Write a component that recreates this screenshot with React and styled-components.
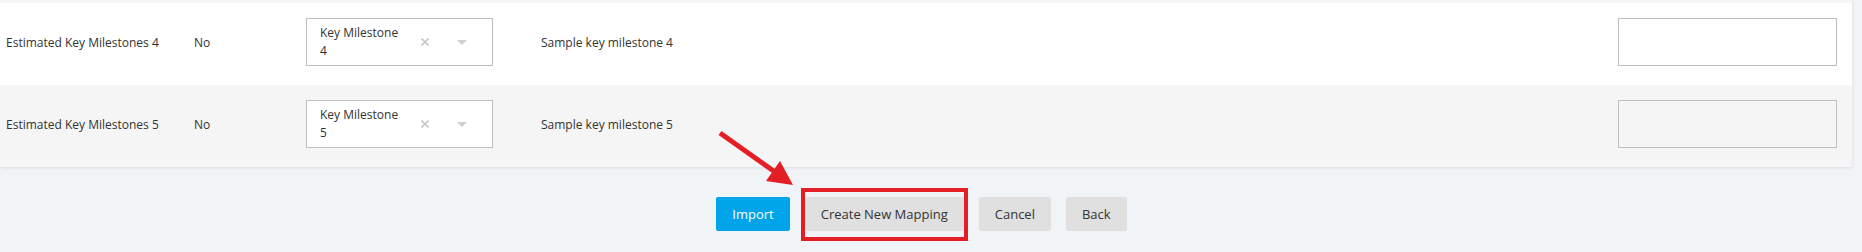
import React from 'react'
import styled, { createGlobalStyle } from 'styled-components'

const rows = [
  { field: 'Estimated Key Milestones 4', required: 'No', value: 'Key Milestone 4', sample: 'Sample key milestone 4' },
  { field: 'Estimated Key Milestones 5', required: 'No', value: 'Key Milestone 5', sample: 'Sample key milestone 5' },
]

export default function App() {
  return (
    <Page>
      <GlobalStyle />
      {/* Tabela de mapeamento */}
      <Panel>
        <RowTail />
        {rows.map((row, i) => (
          <Row key={row.field} striped={i % 2 === 1}>
            <Cell>{row.field}</Cell>
            <Cell>{row.required}</Cell>
            <Cell>
              <Select>
                <SelectValue>{row.value}</SelectValue>
                <ClearIcon viewBox="0 0 8 8">
                  <path d="M0.5 0.5 L7.5 7.5 M7.5 0.5 L0.5 7.5" />
                </ClearIcon>
                <Caret />
              </Select>
            </Cell>
            <Cell>{row.sample}</Cell>
            <TextInput striped={i % 2 === 1} />
          </Row>
        ))}
      </Panel>

      {/* Ações */}
      <Actions>
        <Button primary>Import</Button>
        <Highlight>
          <Button>Create New Mapping</Button>
          <RedBox />
          <Arrow width="80" height="60" viewBox="0 0 80 60">
            <line x1="3" y1="4" x2="58" y2="43" stroke="#e31e24" strokeWidth="5" />
            <polygon points="63,32 49,52 76,56" fill="#e31e24" />
          </Arrow>
        </Highlight>
        <Button>Cancel</Button>
        <Button>Back</Button>
      </Actions>
    </Page>
  )
}

const GlobalStyle = createGlobalStyle`
  body {
    margin: 0;
    background: #f1f4f7;
    font-family: "Open Sans", "Liberation Sans", sans-serif;
    color: #333;
  }
`

const Page = styled.div`
  width: 1862px;
  height: 252px;
  overflow: hidden;
`

const Panel = styled.div`
  width: 1852px;
  background: #fff;
  border-bottom: 1px solid #e2e6ea;
  box-shadow: 1px 1px 3px rgba(0, 0, 0, 0.06);
`

const RowTail = styled.div`
  height: 3px;
  background: #f5f5f5;
`

const Row = styled.div`
  display: grid;
  grid-template-columns: 188px 112px 235px 1fr 219px;
  align-items: center;
  padding: 15px 15px 19px 6px;
  background: ${({ striped }) => (striped ? '#f5f5f5' : '#fff')};
  font-size: 12px;
`

const Cell = styled.div`
  white-space: nowrap;
`

const Select = styled.div`
  box-sizing: border-box;
  display: flex;
  align-items: center;
  width: 187px;
  height: 48px;
  padding-left: 13px;
  border: 1px solid #bfbfbf;
  background: #fff;
`

const SelectValue = styled.div`
  width: 84px;
  white-space: normal;
  line-height: 18px;
  color: #333;
`

const ClearIcon = styled.svg`
  width: 8px;
  height: 8px;
  margin-left: 17px;
  stroke: #c8c8c8;
  stroke-width: 1.6;
`

const Caret = styled.div`
  margin-left: 28px;
  width: 0;
  height: 0;
  border-left: 5px solid transparent;
  border-right: 5px solid transparent;
  border-top: 5px solid #cfcfcf;
`

const TextInput = styled.div`
  box-sizing: border-box;
  height: 48px;
  border: 1px solid #bfbfbf;
  background: ${({ striped }) => (striped ? '#f5f5f5' : '#fff')};
`

const Actions = styled.div`
  display: flex;
  justify-content: center;
  gap: 15px;
  padding: 29px 19px 0 0;
`

const Button = styled.button`
  height: 34px;
  padding: 0 16px;
  border: none;
  border-radius: 2px;
  font-family: "Open Sans", "Liberation Sans", sans-serif;
  font-size: 13px;
  color: ${({ primary }) => (primary ? '#fff' : '#333')};
  background: ${({ primary }) => (primary ? '#00a4e8' : '#e0e0e0')};
`

const Highlight = styled.div`
  position: relative;
  display: flex;
`

const RedBox = styled.div`
  position: absolute;
  left: -4px;
  top: -9px;
  right: -4px;
  bottom: -10px;
  border: 4px solid #e31e24;
  pointer-events: none;
`

const Arrow = styled.svg`
  position: absolute;
  left: -88px;
  top: -68px;
`
